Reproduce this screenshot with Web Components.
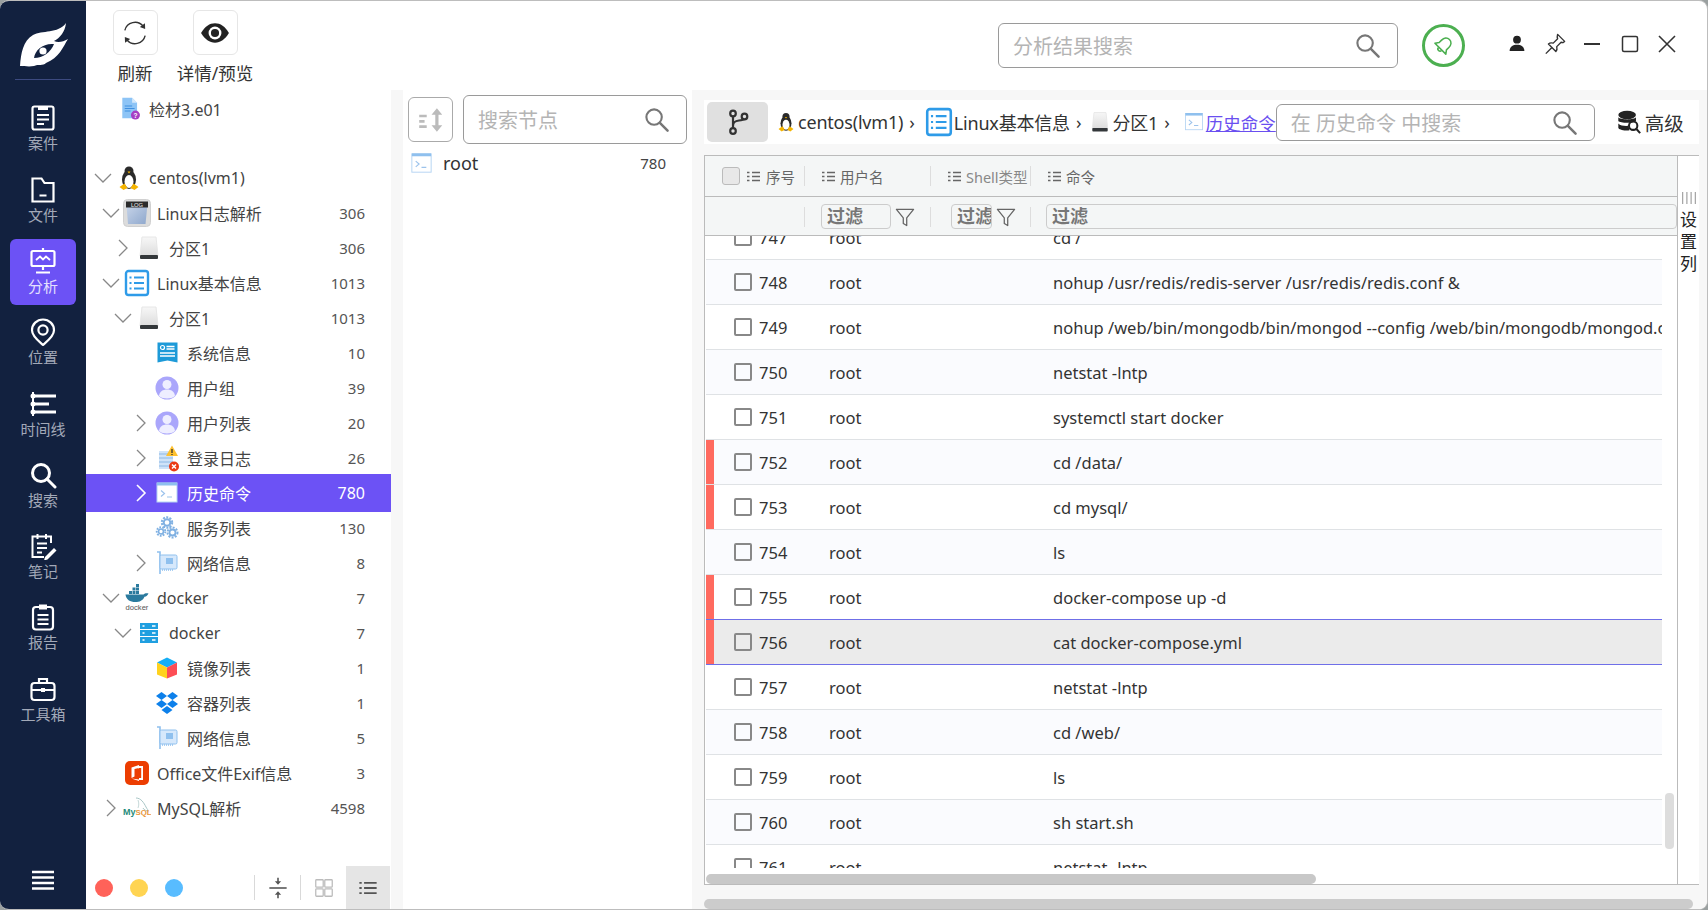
<!DOCTYPE html>
<html lang="zh">
<head>
<meta charset="utf-8">
<title>analysis</title>
<style>
  html, body { margin: 0; height: 100%; background: #9aa0a0; overflow: hidden; }
  body { font-family: "Noto Sans", "Noto Sans CJK SC", sans-serif; color: #333; }
</style>
</head>
<body>

<app-shell>
  <side-nav slot="nav">
    <nav-item icon="case">案件</nav-item>
    <nav-item icon="folder">文件</nav-item>
    <nav-item icon="screen" active>分析</nav-item>
    <nav-item icon="pin">位置</nav-item>
    <nav-item icon="timeline">时间线</nav-item>
    <nav-item icon="find">搜索</nav-item>
    <nav-item icon="note">笔记</nav-item>
    <nav-item icon="report">报告</nav-item>
    <nav-item icon="toolbox">工具箱</nav-item>
  </side-nav>

  <top-bar slot="top">
    <tool-button icon="refresh">刷新</tool-button>
    <tool-button icon="eye">详情/预览</tool-button>
  </top-bar>

  <tree-panel slot="tree">
    <tree-row pad="6" chev="open" icon="linux">centos(lvm1)</tree-row>
    <tree-row pad="14" chev="open" icon="log" count="306">Linux日志解析</tree-row>
    <tree-row pad="26" chev="closed" icon="disk" count="306">分区1</tree-row>
    <tree-row pad="14" chev="open" icon="listblue" count="1013">Linux基本信息</tree-row>
    <tree-row pad="26" chev="open" icon="disk" count="1013">分区1</tree-row>
    <tree-row pad="44" icon="sysinfo" count="10">系统信息</tree-row>
    <tree-row pad="44" icon="user" count="39">用户组</tree-row>
    <tree-row pad="44" chev="closed" icon="user" count="20">用户列表</tree-row>
    <tree-row pad="44" chev="closed" icon="loginlog" count="26">登录日志</tree-row>
    <tree-row pad="44" chev="closed" icon="terminal" count="780" active>历史命令</tree-row>
    <tree-row pad="44" icon="service" count="130">服务列表</tree-row>
    <tree-row pad="44" chev="closed" icon="netcard" count="8">网络信息</tree-row>
    <tree-row pad="14" chev="open" icon="docker" count="7">docker</tree-row>
    <tree-row pad="26" chev="open" icon="server" count="7">docker</tree-row>
    <tree-row pad="44" icon="cube" count="1">镜像列表</tree-row>
    <tree-row pad="44" icon="dropbox" count="1">容器列表</tree-row>
    <tree-row pad="44" icon="netcard" count="5">网络信息</tree-row>
    <tree-row pad="14" icon="office" count="3">Office文件Exif信息</tree-row>
    <tree-row pad="14" chev="closed" icon="mysql" count="4598">MySQL解析</tree-row>
  </tree-panel>

  <node-panel slot="nodes"></node-panel>
  <result-panel slot="result"></result-panel>
</app-shell>

<script>
const ICONS = {
  // side nav, white outline
  case: '<g fill="none" stroke="#fff" stroke-width="2.2"><rect x="3.5" y="2.5" width="21" height="23" rx="2"/><path d="M8 11h12M8 15.500h12M8 20h7"/></g><path d="M9 2h10v4H9z" fill="#fff"/>',
  folder: '<g fill="none" stroke="#fff" stroke-width="2.2"><path d="M3.500 2.500h9l3 4.500h9v18.500h-21z"/><path d="M10.500 19.500h7"/></g>',
  screen: '<g fill="none" stroke="#fff" stroke-width="2.200"><rect x="2.500" y="4" width="23" height="15" rx="1.500"/><path d="M14 1v3M14 19v4M7 25.500h14"/><path d="M7 13l4-3.500 3 3 3-3 4 3.500" stroke-width="1.800"/></g>',
  pin: '<g fill="none" stroke="#fff" stroke-width="2.200"><path d="M14 1.500c6.200 0 11 4.800 11 10.800 0 6-6.500 10.700-11 14.700-4.500-4-11-8.700-11-14.700C3 6.300 7.800 1.500 14 1.500z"/><circle cx="14" cy="12" r="4.600"/></g>',
  timeline: '<g fill="none" stroke="#fff"><path d="M4 2v24" stroke-width="2"/><path d="M4 6h23M4 14h16M4 22h23" stroke-width="3.200"/></g><circle cx="4" cy="6" r="2.500" fill="#fff"/><circle cx="4" cy="14" r="2.500" fill="#fff"/><circle cx="4" cy="22" r="2.500" fill="#fff"/>',
  find: '<g fill="none" stroke="#fff" stroke-width="3"><circle cx="12" cy="12" r="8.500"/><path d="M18 18l8 8" stroke-linecap="round"/></g>',
  note: '<g fill="none" stroke="#fff" stroke-width="2"><path d="M22 11V4.500H3.500V25H15"/><path d="M8.500 2v5M17 2v5M8 11.500h10M8 16h10M8 20.500h5"/></g><path d="M16 25l9-9 2.500 2.500-9 9-3.500 1z" fill="#fff"/>',
  report: '<g fill="none" stroke="#fff" stroke-width="2.200"><rect x="4" y="4" width="20" height="22.500" rx="3"/><path d="M8.500 12h11M8.500 16.500h11M8.500 21h11"/></g><path d="M10 1.500h8v5h-8z" fill="#fff"/>',
  toolbox: '<g fill="none" stroke="#fff" stroke-width="2.200"><rect x="2.500" y="8" width="23" height="17" rx="3"/><path d="M10 8V4h8v4M2.500 15h23"/></g><rect x="12" y="13" width="4" height="4" fill="#fff"/>',
  menu: '<path d="M3 6h22M3 11.500h22M3 17h22M3 22.500h22" stroke="#fff" stroke-width="2.400"/>',

  // tree nodes
  linux: '<ellipse cx="14" cy="15.500" rx="7" ry="9.500" fill="#2a2a2a"/><circle cx="14" cy="7" r="4.500" fill="#2a2a2a"/><ellipse cx="14" cy="17.500" rx="4.500" ry="6.500" fill="#fff"/><path d="M12.500 7.500h3L14 9.500z" fill="#f5b400"/><path d="M4.500 23l5-3.500 3 4.500-4 2zM23.500 23l-5-3.500-3 4.500 4 2z" fill="#f5b400"/>',
  log: '<defs><linearGradient id="lg" x1="0" y1="0" x2="1" y2="1"><stop offset="0" stop-color="#c9d6ea"/><stop offset="1" stop-color="#8ea7cc"/></linearGradient></defs><rect x=".5" y=".5" width="27" height="27" rx="4" fill="#dcdcdc" stroke="#d0d0d0"/><path d="M3.500 6.500l21-1.500-2 20H5z" fill="url(#lg)"/><rect x="3" y="2.500" width="22" height="6" fill="#2b2b2b"/><text x="14" y="7.600" font-size="5.800" font-family="Liberation Sans, sans-serif" fill="#eee" text-anchor="middle">LOG</text>',
  disk: '<defs><linearGradient id="dg" x1="0" y1="0" x2="0" y2="1"><stop offset="0" stop-color="#f7f7f7"/><stop offset="1" stop-color="#dcdcdc"/></linearGradient></defs><path d="M7 3h14l2 19H5z" fill="url(#dg)" stroke="#e6e6e6"/><rect x="5" y="21" width="18" height="4" rx="1" fill="#33373a"/>',
  listblue: '<rect x="3" y="2" width="22" height="24" rx="2.500" fill="#fff" stroke="#2e9be8" stroke-width="2.400"/><path d="M11 8.500h10M11 14h10M11 19.500h10M6.500 8.500h2M6.500 14h2M6.500 19.500h2" stroke="#2e9be8" stroke-width="2"/>',
  sysinfo: '<path d="M4.500 3.500h20v20l-10-2-10 2z" fill="#1d9ad8"/><circle cx="9.500" cy="8.500" r="2" fill="none" stroke="#fff" stroke-width="1.200"/><path d="M13.500 7.500h8M13.500 10h8M7 14h15M7 17h15" stroke="#fff" stroke-width="1.300"/>',
  user: '<circle cx="14" cy="14" r="11.500" fill="#aaa6fb"/><circle cx="14" cy="10.500" r="4.500" fill="#eeeeff"/><path d="M6 22c.5-4.500 4-6.500 8-6.500s7.500 2 8 6.500c-2.200 1.800-5 2.500-8 2.500s-5.800-.7-8-2.500z" fill="#eeeeff"/>',
  loginlog: '<rect x="6" y="7" width="14" height="18" fill="#cfe3f8"/><path d="M6 10h14M6 14h14M6 18h14M6 22h14" stroke="#8db8e4" stroke-width="1"/><path d="M19 1.500l6 10.500H13z" fill="#fdc02f"/><path d="M19 5v4M19 10v1" stroke="#333" stroke-width="1.300"/><circle cx="21" cy="22.500" r="5" fill="#ea3a14"/><path d="M19 20.500l4 4M23 20.500l-4 4" stroke="#fff" stroke-width="1.500"/>',
  terminal: '<rect x="4" y="4" width="20" height="19" fill="#fff" stroke="#b5d4f3"/><rect x="4" y="3.500" width="20" height="3" fill="#8fc0ee"/><path d="M8 11.500l3.500 3-3.500 3M14 18h5" fill="none" stroke="#9cc3ec" stroke-width="1.200"/>',
  service: '<g fill="none" stroke="#7fb0e2"><circle cx="14" cy="8.500" r="3.300" stroke-width="2"/><circle cx="14" cy="8.500" r="5.200" stroke-width="2" stroke-dasharray="2 1.300"/><circle cx="8" cy="17.500" r="2.500" stroke-width="1.700"/><circle cx="8" cy="17.500" r="4.300" stroke-width="1.800" stroke-dasharray="1.800 1.200"/><circle cx="19.500" cy="18.500" r="3" stroke-width="1.800"/><circle cx="19.500" cy="18.500" r="5" stroke-width="2" stroke-dasharray="2 1.300"/></g>',
  netcard: '<path d="M4 3h3v22" fill="none" stroke="#8fc0ee" stroke-width="1.600"/><rect x="7" y="6" width="17" height="14" rx="1.500" fill="#d6e8fb" stroke="#8fc0ee"/><rect x="13" y="9" width="7" height="6" fill="#8fc0ee"/><path d="M9 21h12" stroke="#8fc0ee" stroke-width="1.600" stroke-dasharray="1 1"/>',
  docker: '<path d="M2.500 10.500h18c1.200-1.200 3-1.500 5-1-1 2-2 3-4 3.200-1.500 3.800-5 5.300-9 5.300-5.500 0-9.500-2.500-10-7.500z" fill="#2a7a9e"/><path d="M6 7h3v3H6zM9.500 7h3v3h-3zM13 7h3v3h-3zM9.500 3.500h3v3h-3zM13 3.500h3v3h-3zM13 0h3v3h-3z" fill="#2a7a9e"/><text x="14" y="26" font-size="7.600" font-family="Liberation Sans, sans-serif" fill="#555" text-anchor="middle">docker</text>',
  server: '<rect x="5" y="4" width="18" height="6" fill="#1f9fe0"/><rect x="5" y="11" width="18" height="6" fill="#1f9fe0"/><rect x="5" y="18" width="18" height="6" fill="#1f9fe0"/><path d="M7.500 7h2M7.500 14h2M7.500 21h2M17 7h3.500M17 14h3.500M17 21h3.500" stroke="#fff" stroke-width="1.300"/>',
  cube: '<path d="M14 3.500l10 5-10 5-10-5z" fill="#16aef5"/><path d="M4 8.500l10 5v11l-10-4z" fill="#ffd21e"/><path d="M24 8.500l-10 5v11l10-4z" fill="#fd4e55"/>',
  dropbox: '<path d="M8.500 3l5.500 4-5.500 4L3 7zM19.500 3L25 7l-5.500 4L14 7zM8.500 11l5.500 4-5.500 4L3 15zM19.500 11l5.500 4-5.500 4L14 15zM14 17l5.500 4-5.500 4-5.500-4z" fill="#0d80ea"/>',
  office: '<rect x="2" y="2" width="24" height="24" rx="5" fill="#ec3d01"/><path d="M8.500 8.500L16 6v16l-7.500-2.500 7.500 1V9l-4.500 1v7.500l-3 1.500z" fill="#fff"/><path d="M16 7h4v14h-4z" fill="#fff"/><path d="M16 9h2.200v10H16z" fill="#ec3d01"/>',
  mysql: '<path d="M13 4c5 0 8 5 10 9 1 2 2 3 3 4-3 0-5-1-6-3" fill="none" stroke="#a9c6c6" stroke-width="1"/><path d="M15 6c1 3 1 5 0 8" fill="none" stroke="#c6d9d9" stroke-width="1"/><text x="0" y="20.500" font-size="9" font-weight="700" font-family="Liberation Sans, sans-serif" fill="#1f8b7a">My</text><text x="12.500" y="20.500" font-size="7.800" font-weight="700" font-family="Liberation Sans, sans-serif" fill="#e9973a">SQL</text>',

  // toolbars
  refresh: '<g fill="none" stroke="#333" stroke-width="1.300"><path d="M4.500 11.500A9.800 9.800 0 0 1 21.500 7.500"/><path d="M23.500 16.500A9.800 9.800 0 0 1 6.500 20.500"/></g><path d="M23.300 4.800l.2 5.400-5-1.800zM4.700 23.200L4.500 17.800l5 1.800z" fill="#333"/>',
  eye: '<path d="M1 14c3.500-6 8-9 13-9s9.500 3 13 9c-3.500 6-8 9-13 9S4.500 20 1 14z" fill="#222"/><circle cx="14" cy="14" r="6" fill="#fff"/><circle cx="14" cy="14" r="3.800" fill="#222"/>',
  magnifier: '<g fill="none" stroke="#777" stroke-width="2.200"><circle cx="11.500" cy="11.500" r="8"/><path d="M17.500 17.500l8 8" stroke-linecap="round" stroke-width="2.600"/></g>',
  bell: '<g transform="rotate(45 14 14)" fill="none" stroke="#4caf50" stroke-width="1.800" stroke-linejoin="round"><path d="M14 5c-4 0-6 3-6 7v4l-3 4h18l-3-4v-4c0-4-2-7-6-7z"/><path d="M11.500 20.500a2.500 2.500 0 0 0 5 0"/></g>',
  person: '<circle cx="14" cy="8.500" r="5" fill="#222"/><path d="M4.500 23c0-5.500 4.500-8 9.500-8s9.500 2.500 9.500 8z" fill="#222"/>',
  thumbtack: '<g fill="none" stroke="#333" stroke-width="1.600" stroke-linejoin="round"><path d="M17 3l8 8-2 1.500-2-.5-5 5c.5 2 .5 4-1 5.500L6.500 14c1.500-1.500 3.500-1.500 5.500-1l5-5-.5-2z"/><path d="M10.500 18L3.500 25"/></g>',
  minimize: '<path d="M6 14h16" stroke="#333" stroke-width="1.800"/>',
  maximize: '<rect x="6.500" y="6.500" width="15" height="15" rx="1.500" fill="none" stroke="#333" stroke-width="1.500"/>',
  close: '<path d="M6 6l16 16M22 6L6 22" stroke="#333" stroke-width="1.600"/>',
  sorter: '<g fill="#bbb"><path d="M3 9h7v2.500H3zM3 14h5v2.500H3zM3 19h7v2.500H3z"/><path d="M19.500 3l5 6h-3.500v10h3.500l-5 6-5-6H18V9h-3.500z"/></g>',
  branch: '<g fill="none" stroke="#333" stroke-width="2.200"><circle cx="9" cy="5.500" r="2.800"/><circle cx="9" cy="23" r="2.800"/><circle cx="20.500" cy="8.500" r="2.800"/><path d="M9 8.300v12M9 18c0-4 2-5 6-5.500 3-.3 5-1 5.500-1.500"/></g>',
  dbsearch: '<ellipse cx="12" cy="6.500" rx="9.500" ry="4.500" fill="#222"/><path d="M2.500 9c2 3 17 3 19 0v4c-2 2.500-17 2.500-19 0zM2.500 15.500c2 2.500 8 3 11 2.500l1 5c-3 .5-10 .2-12-2.500z" fill="#222"/><g fill="none" stroke="#222" stroke-width="2.200"><circle cx="18.500" cy="18" r="4.500"/><path d="M22 21.500l4 4.500"/></g>',
  rows: '<path d="M6 3.500h8M6 7.500h8M6 11.500h8M1 3.500h2.500M1 7.500h2.500M1 11.500h2.500" stroke="#666" stroke-width="1.400"/>',
  funnel: '<path d="M4 5h20l-8 10v9l-4-2.500V15z" fill="none" stroke="#666" stroke-width="1.500" stroke-linejoin="round"/>',
  squeeze: '<path d="M3 14h22" stroke="#555" stroke-width="2"/><path d="M14 10L10 5.500h3V1h2v4.500h3zM14 18l-4 4.500h3V27h2v-4.500h3z" fill="#555"/>',
  grid4: '<g fill="none" stroke="#bbb" stroke-width="1.600"><rect x="3.500" y="3.500" width="9.500" height="9.500" rx="1"/><rect x="15" y="3.500" width="9.500" height="9.500" rx="1"/><rect x="3.500" y="15" width="9.500" height="9.500" rx="1"/><rect x="15" y="15" width="9.500" height="9.500" rx="1"/></g>',
  listing: '<path d="M9 7.500h16M9 14h16M9 20.500h16" stroke="#555" stroke-width="2.400"/><path d="M3 7.500h3M3 14h3M3 20.500h3" stroke="#555" stroke-width="2.400"/>',
  evidence: '<path d="M4 1h12l6 6v19H4z" fill="#8dc4f6"/><path d="M16 1l6 6h-6z" fill="#d5e9fb"/><path d="M7 11h9M7 14h12M7 17h7" stroke="#3f8fe0" stroke-width="1.300"/><circle cx="20" cy="22" r="5.500" fill="#a63fc4"/><text x="20" y="25" font-size="8" font-weight="700" font-family="Liberation Sans, sans-serif" fill="#fff" text-anchor="middle">?</text>',
  columns: '<path d="M2 1v14M7 1v14M12 1v14M17 1v14" stroke="#999" stroke-width="1.300"/>'
};

function attach(el, html) {
  const t = document.createElement("template");
  t.innerHTML = html;
  el.attachShadow({ mode: "open" }).append(t.content.cloneNode(true));
}

class AppIcon extends HTMLElement {
  connectedCallback() {
    if (this.shadowRoot) return;
    const size = this.getAttribute("size") || 28;
    const box = this.getAttribute("box") || "0 0 28 28";
    attach(this, `
      <style>:host { display: inline-flex; flex: none; } svg { display: block; }</style>
      <svg width="${size}" height="${size}" viewBox="${box}">${ICONS[this.getAttribute("name")]}</svg>`);
  }
}
customElements.define("app-icon", AppIcon);

class AppShell extends HTMLElement {
  constructor() {
    super();
    attach(this, `
      <style>
        :host {
          display: grid; box-sizing: border-box; width: 1708px; height: 910px;
          grid-template-columns: 86px 305px 12px 289px 1015px;
          grid-template-rows: 89px 819px;
          grid-template-areas: "nav top top top top" "nav tree gap nodes result";
          background: #fff; border: 1px solid #bdbdbd; border-left: 0;
          border-radius: 9px; overflow: hidden;
        }
        .nav { grid-area: nav; display: flex; min-width: 0; }
        .top { grid-area: top; display: flex; min-width: 0; }
        .tree { grid-area: tree; display: flex; min-height: 0; min-width: 0; }
        .gap { grid-area: gap; background: #f7f7f7; }
        .nodes { grid-area: nodes; display: flex; min-width: 0; }
        .result { grid-area: result; display: flex; min-width: 0; min-height: 0; }
      </style>
      <div class="nav"><slot name="nav"></slot></div>
      <div class="top"><slot name="top"></slot></div>
      <div class="tree"><slot name="tree"></slot></div>
      <div class="gap"></div>
      <div class="nodes"><slot name="nodes"></slot></div>
      <div class="result"><slot name="result"></slot></div>`);
  }
}
customElements.define("app-shell", AppShell);

class SideNav extends HTMLElement {
  constructor() {
    super();
    attach(this, `
      <style>
        :host { display: flex; flex-direction: column; flex: 1; min-width: 0; background: #12213f; }
        .logo { height: 79px; box-sizing: border-box; margin: 0 15px; border-bottom: 1px solid #3c4a80; }
        .logo svg { display: block; margin-left: -15px; }
        .items { display: flex; flex-direction: column; gap: 5.3px; padding: 16.400px 10px 0; }
        .foot { margin-top: auto; display: flex; justify-content: center; padding-bottom: 15px; }
      </style>
      <div class="logo">
        <svg width="86" height="78" viewBox="0 0 86 78">
          <path fill="#fff" d="M20 65C21 52 23 40 33 34 42 29 58 33 66 22 65 31 60 37 54 40 58 42 63 41 68 38 63 46 59 57 46 62 43 65 38 63 34 65 29 66 24 65 20 65Z"/>
          <path fill="#12213f" d="M34 57C35 49 43 42 54 43 51 51 43 57 34 57Z"/>
          <circle cx="43" cy="50" r="3.600" fill="#fff"/>
        </svg>
      </div>
      <div class="items"><slot></slot></div>
      <div class="foot"><app-icon name="menu" size="28"></app-icon></div>`);
  }
}
customElements.define("side-nav", SideNav);

class NavItem extends HTMLElement {
  connectedCallback() {
    if (this.shadowRoot) return;
    attach(this, `
      <style>
        :host {
          display: flex; flex-direction: column; align-items: center; height: 66px; box-sizing: border-box;
          padding-top: 8px; border-radius: 6px; color: #a2a9b8; font-size: 15px; line-height: 20px;
        }
        :host([active]) { background: #6c52f5; color: #e4e0ff; }
        span { margin-top: 1px; }
      </style>
      <app-icon name="${this.getAttribute("icon")}" size="28"></app-icon>
      <span><slot></slot></span>`);
  }
}
customElements.define("nav-item", NavItem);

class ToolButton extends HTMLElement {
  connectedCallback() {
    if (this.shadowRoot) return;
    attach(this, `
      <style>
        :host { display: flex; flex-direction: column; align-items: center; width: 80px; font-size: 17.500px; line-height: 24px; color: #333; white-space: nowrap; }
        .box {
          width: 45px; height: 45px; box-sizing: border-box; border: 1px solid #e6e6e6; border-radius: 6px;
          display: flex; align-items: center; justify-content: center; margin-bottom: 6px;
        }
      </style>
      <div class="box"><app-icon name="${this.getAttribute("icon")}" size="30"></app-icon></div>
      <slot></slot>`);
  }
}
customElements.define("tool-button", ToolButton);

class SearchBox extends HTMLElement {
  connectedCallback() {
    if (this.shadowRoot) return;
    attach(this, `
      <style>
        :host {
          display: flex; align-items: center; justify-content: space-between; box-sizing: border-box;
          border: 1px solid #9a9a9a; border-radius: 6px; background: #fff; color: #b4b4b4; font-size: 20px;
          padding: 0 16px 0 14px; white-space: nowrap;
        }
      </style>
      <span><slot></slot></span>
      <app-icon name="magnifier" size="27"></app-icon>`);
  }
}
customElements.define("search-box", SearchBox);

class TopBar extends HTMLElement {
  constructor() {
    super();
    attach(this, `
      <style>
        :host { display: flex; flex: 1; min-width: 0; align-items: flex-start; padding: 9px 0 0 0; box-sizing: border-box; }
        .tools { display: flex; margin-left: 9px; flex: 1; }
        .right { display: flex; align-items: center; height: 70px; }
        search-box { width: 400px; height: 45px; margin-right: 24px; }
        .bell {
          width: 43px; height: 43px; box-sizing: border-box; border: 3px solid #4caf50; border-radius: 50%;
          display: flex; align-items: center; justify-content: center; margin-right: 38px;
        }
        .win { display: flex; align-items: center; gap: 9.500px; padding-right: 26px; margin-top: -3px; }
      </style>
      <div class="tools"><slot></slot></div>
      <div class="right">
        <search-box>分析结果搜索</search-box>
        <div class="bell"><app-icon name="bell" size="24"></app-icon></div>
        <div class="win">
          <app-icon name="person" size="28" box="-4 -4 36 36"></app-icon>
          <app-icon name="thumbtack" size="28" box="-2 -2 32 32"></app-icon>
          <app-icon name="minimize" size="28"></app-icon>
          <app-icon name="maximize" size="28"></app-icon>
          <app-icon name="close" size="28"></app-icon>
        </div>
      </div>`);
  }
}
customElements.define("top-bar", TopBar);

class TreeRow extends HTMLElement {
  connectedCallback() {
    if (this.shadowRoot) return;
    const chev = this.getAttribute("chev");
    const path = chev === "open" ? "M3 7l8 8 8-8" : chev === "closed" ? "M7 3l8 8-8 8" : "";
    const count = this.getAttribute("count") || "";
    attach(this, `
      <style>
        :host {
          display: flex; align-items: center; height: 35px; box-sizing: border-box;
          padding: 0 26px 0 ${this.getAttribute("pad")}px; font-size: 16px; color: #444; white-space: nowrap;
        }
        :host([active]) { background: #6c52f5; color: #fff; height: 38px; margin: -1.500px 0; }
        .chev { width: 22px; height: 22px; margin-right: 1px; flex: none; }
        .chev path { fill: none; stroke: #888; stroke-width: 1.300; }
        :host([active]) .chev path { stroke: #fff; stroke-width: 1.600; }
        .name { margin-left: 6px; flex: 1; }
        .count { font-size: 15px; color: #555; }
        :host([active]) .count { color: #fff; font-size: 16px; }
      </style>
      <svg class="chev" viewBox="0 0 22 22"><path d="${path}"/></svg>
      <app-icon name="${this.getAttribute("icon")}" size="28"></app-icon>
      <span class="name"><slot></slot></span>
      <span class="count">${count}</span>`);
  }
}
customElements.define("tree-row", TreeRow);

class TreePanel extends HTMLElement {
  constructor() {
    super();
    attach(this, `
      <style>
        :host { display: flex; flex-direction: column; flex: 1; min-width: 0; min-height: 0; color: #444; }
        .file { display: flex; align-items: center; height: 37px; margin-bottom: 33.800px; padding-left: 33px; font-size: 16px; gap: 7px; }
        .rows { flex: 1; min-height: 0; }
        .foot { display: flex; align-items: center; height: 43px; padding-left: 9px; }
        .dot { width: 18px; height: 18px; border-radius: 50%; margin-right: 17px; }
        .sep { width: 1px; height: 25px; background: #d9d9d9; }
        .cell { width: 45px; height: 43px; display: flex; align-items: center; justify-content: center; }
        .on { background: #e5e5e5; width: 44px; margin-left: 0; }
      </style>
      <div class="file"><app-icon name="evidence" size="23"></app-icon><span>检材3.e01</span></div>
      <div class="rows"><slot></slot></div>
      <div class="foot">
        <span class="dot" style="background:#ff6259"></span>
        <span class="dot" style="background:#ffd452"></span>
        <span class="dot" style="background:#58bcff"></span>
        <span style="flex:1"></span>
        <span class="sep"></span>
        <div class="cell"><app-icon name="squeeze" size="22"></app-icon></div>
        <span class="sep"></span>
        <div class="cell"><app-icon name="grid4" size="22"></app-icon></div>
        <div class="cell on"><app-icon name="listing" size="22"></app-icon></div>
        <span style="width:1px"></span>
      </div>`);
  }
}
customElements.define("tree-panel", TreePanel);

class NodePanel extends HTMLElement {
  constructor() {
    super();
    attach(this, `
      <style>
        :host { display: block; flex: 1; min-width: 0; background: #fff; }
        .head { display: flex; align-items: center; gap: 10px; padding: 5px 5px 0 5px; height: 49px; }
        .sort {
          width: 45px; height: 45px; box-sizing: border-box; border: 1px solid #aaa; border-radius: 6px;
          display: flex; align-items: center; justify-content: center;
        }
        search-box { flex: 1; height: 49px; }
        .row { display: flex; align-items: center; height: 28px; margin-top: 5px; padding: 0 26px 0 5px; }
        .name { font-size: 18px; margin-left: 8px; flex: 1; color: #333; }
        .count { font-size: 15px; color: #444; }
      </style>
      <div class="head">
        <div class="sort"><app-icon name="sorter" size="30"></app-icon></div>
        <search-box>搜索节点</search-box>
      </div>
      <div class="row">
        <app-icon name="terminal" size="27"></app-icon>
        <span class="name">root</span>
        <span class="count">780</span>
      </div>`);
  }
}
customElements.define("node-panel", NodePanel);

class BreadCrumb extends HTMLElement {
  constructor() {
    super();
    attach(this, `
      <style>
        :host {
          display: flex; align-items: center; height: 45px; background: #fff; font-size: 18px; color: #333;
          white-space: nowrap; padding-left: 3px;
        }
        .toggle {
          width: 61px; height: 40px; background: #e0e0e0; border-radius: 5px; margin-right: 7px;
          display: flex; align-items: center; justify-content: center; flex: none;
        }
        .arrow { margin: 0 7px 0 6px; }
        a { color: #6a4ff0; text-decoration: underline; font-size: 17.500px; }
        .txt { letter-spacing: -.2px; }
        search-box { width: 319px; height: 37px; font-size: 20px; margin: 0 21px 0 0; flex: none; }
        .adv { display: flex; align-items: center; gap: 3px; font-size: 19.500px; }
      </style>
      <div class="toggle"><app-icon name="branch" size="28"></app-icon></div>
      <app-icon name="linux" size="22"></app-icon>
      <span class="txt" style="margin-left:1px">centos(lvm1)</span><span class="arrow" style="margin-right:9px">›</span>
      <app-icon name="listblue" size="30"></app-icon>
      <span class="txt">Linux基本信息</span><span class="arrow">›</span>
      <app-icon name="disk" size="24"></app-icon>
      <span class="txt">分区1</span><span class="arrow" style="margin-right:12px">›</span>
      <app-icon name="terminal" size="24"></app-icon>
      <a>历史命令</a>
      <search-box>在 历史命令 中搜索</search-box>
      <div class="adv"><app-icon name="dbsearch" size="26"></app-icon>高级</div>`);
  }
}
customElements.define("bread-crumb", BreadCrumb);

class TableRow extends HTMLElement {
  connectedCallback() {
    if (this.shadowRoot) return;
    attach(this, `
      <style>
        :host {
          display: grid; grid-template-columns: 8px 20px 18px 7px 70px 224px 1fr; align-items: center;
          height: 45px; box-sizing: border-box; border-bottom: 1px solid #dfe2e5; font-size: 16.500px; color: #333;
          white-space: nowrap; background: #fff;
        }
        :host([even]) { background: #fafbfe; }
        :host([selected]) { background: #ebebeb; border-bottom-color: #6f6fe8; box-shadow: 0 -1px 0 #6f6fe8; }
        .bar { grid-column: 1; align-self: stretch; }
        :host([marked]) .bar { background: #ff6a5f; }
        .box { grid-column: 3; width: 18px; height: 18px; box-sizing: border-box; border: 2px solid #888; border-radius: 2px; }
        .num { grid-column: 5; }
        .cmd { overflow: hidden; }
      </style>
      <div class="bar"></div>
      <div class="box"></div>
      <span class="num">${this.getAttribute("num")}</span>
      <span>root</span>
      <span class="cmd">${this.getAttribute("cmd")}</span>`);
  }
}
customElements.define("table-row", TableRow);

const HISTORY = [
  [747, "cd /"],
  [748, "nohup /usr/redis/redis-server /usr/redis/redis.conf &amp;"],
  [749, "nohup /web/bin/mongodb/bin/mongod --config /web/bin/mongodb/mongod.conf"],
  [750, "netstat -lntp"],
  [751, "systemctl start docker"],
  [752, "cd /data/", "marked"],
  [753, "cd mysql/", "marked"],
  [754, "ls"],
  [755, "docker-compose up -d", "marked"],
  [756, "cat docker-compose.yml", "marked selected"],
  [757, "netstat -lntp"],
  [758, "cd /web/"],
  [759, "ls"],
  [760, "sh start.sh"],
  [761, "netstat -lntp"]
];

class DataTable extends HTMLElement {
  constructor() {
    super();
    const rows = HISTORY.map(([num, cmd, flags]) =>
      `<table-row num="${num}" cmd="${cmd}" ${num % 2 ? "" : "even"} ${flags || ""}></table-row>`).join("");
    attach(this, `
      <style>
        :host {
          display: flex; height: 730px; box-sizing: border-box; background: #fff;
          border: 1px solid #bbb; border-right: 0;
        }
        .main { width: 972px; flex: none; display: flex; flex-direction: column; border-right: 1px solid #bbb; position: relative; min-height: 0; }
        .head, .filter {
          display: grid; grid-template-columns: 100px 126px 100px 1fr; align-items: center;
          background: #f4f6f6; border-bottom: 1px solid #bbb; box-sizing: border-box; color: #666; font-size: 14.500px;
        }
        .head { height: 41px; }
        .filter { height: 38.500px; padding-top: 2px; }
        .cell { display: flex; align-items: center; height: 20px; border-right: 1px solid #ddd; white-space: nowrap; }
        .cell:last-child { border-right: 0; }
        .head .cell { padding-left: 16px; gap: 4px; box-sizing: border-box; }
        .head .cell:first-child { padding-left: 17px; gap: 5px; }
        .check { width: 18px; height: 18px; box-sizing: border-box; border: 1px solid #bbb; border-radius: 3px; background: #e8e8e8; margin-right: 1px; }
        .shell { font-size: 14.500px; color: #888; }
        .input {
          box-sizing: border-box; height: 25px; border: 1px solid #ccc; border-radius: 4px; font-size: 18px;
          font-weight: 700; color: #777; padding-left: 5px; line-height: 23px; overflow: hidden; flex: none;
        }
        .filter .cell { height: 20px; box-sizing: border-box; overflow: visible; }
        .body { flex: 1; min-height: 0; overflow: hidden; padding-left: 1px; padding-right: 15px; }
        .list { margin-top: -20.500px; }
        .thumb-y { position: absolute; right: 3px; top: 637px; width: 9px; height: 56px; border-radius: 4px; background: #ddd; }
        .track-x { height: 16px; box-sizing: border-box; padding: 6px 0 0 1px; flex: none; }
        .thumb-x { width: 610px; height: 10px; border-radius: 5px; background: #c8c8c8; }
        .side {
          flex: 1; display: flex; flex-direction: column; align-items: center; padding-top: 34px;
          font-size: 17px; line-height: 22px; color: #222;
        }
      </style>
      <div class="main">
        <div class="head">
          <div class="cell"><span class="check"></span><app-icon name="rows" size="15" box="0 0 15 15"></app-icon><span>序号</span></div>
          <div class="cell"><app-icon name="rows" size="15" box="0 0 15 15"></app-icon><span>用户名</span></div>
          <div class="cell"><app-icon name="rows" size="15" box="0 0 15 15"></app-icon><span class="shell">Shell类型</span></div>
          <div class="cell"><app-icon name="rows" size="15" box="0 0 15 15"></app-icon><span>命令</span></div>
        </div>
        <div class="filter">
          <div class="cell"></div>
          <div class="cell" style="padding-left:16px"><span class="input" style="width:70px">过滤</span><app-icon name="funnel" size="24" style="margin-left:2px"></app-icon></div>
          <div class="cell" style="padding-left:20px"><span class="input" style="width:41px">过滤</span><app-icon name="funnel" size="24" style="margin-left:2px"></app-icon></div>
          <div class="cell" style="padding-left:15px"><span class="input" style="flex:1">过滤</span></div>
        </div>
        <div class="body"><div class="list">${rows}</div></div>
        <div class="thumb-y"></div>
        <div class="track-x"><div class="thumb-x"></div></div>
      </div>
      <div class="side">
        <app-icon name="columns" size="16" box="0 0 19 16"></app-icon>
        <span style="margin-top:3px">设</span><span>置</span><span>列</span>
      </div>`);
  }
}
customElements.define("data-table", DataTable);

class ResultPanel extends HTMLElement {
  constructor() {
    super();
    attach(this, `
      <style>
        :host { display: flex; flex-direction: column; flex: 1; min-width: 0; background: #f7f7f7; padding: 10px 8px 0 12px; box-sizing: border-box; }
        data-table { margin-top: 11px; }
        .scroll { margin-top: 14px; height: 10px; width: 989px; border-radius: 5px; background: #ccc; }
      </style>
      <bread-crumb></bread-crumb>
      <data-table></data-table>
      <div class="scroll"></div>`);
  }
}
customElements.define("result-panel", ResultPanel);
</script>
</body>
</html>
